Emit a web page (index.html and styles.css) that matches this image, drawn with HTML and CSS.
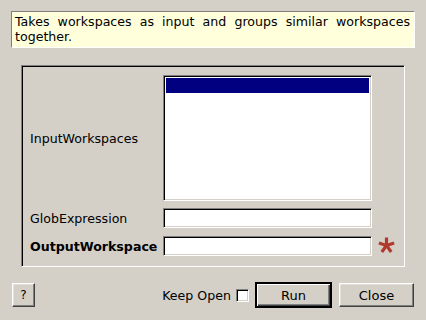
FILE: index.html
```html
<!DOCTYPE html>
<html>
<head>
    <title>GroupWorkspaces</title>
    <link rel="stylesheet" href="styles.css">
</head>
<body>
    <div class="dialog">
        <p class="description">Takes workspaces as input and groups similar workspaces together.</p>

        <div class="prop-frame">
            <label class="prop-label">InputWorkspaces</label>
            <div class="list-box">
                <div class="list-item selected"></div>
            </div>
            <span></span>

            <label class="prop-label">GlobExpression</label>
            <input type="text" class="text-field">
            <span></span>

            <label class="prop-label mandatory">OutputWorkspace</label>
            <input type="text" class="text-field">
            <svg class="required" width="17" height="17" viewBox="0 0 17 17">
                <g stroke="#b03a2c" stroke-width="3.2" stroke-linecap="butt">
                    <line x1="8.5" y1="8.5" x2="8.5" y2="0.5"/>
                    <line x1="8.5" y1="8.5" x2="16.1" y2="6"/>
                    <line x1="8.5" y1="8.5" x2="13.2" y2="15"/>
                    <line x1="8.5" y1="8.5" x2="3.8" y2="15"/>
                    <line x1="8.5" y1="8.5" x2="0.9" y2="6"/>
                </g>
            </svg>
        </div>

        <div class="footer">
            <button class="button help">?</button>
            <div class="footer-right">
                <label class="keep-open">Keep Open <span class="check-box"></span></label>
                <button class="button default">Run</button>
                <button class="button">Close</button>
            </div>
        </div>
    </div>
</body>
</html>
```

FILE: styles.css
```css
body {
    margin: 0;
    background: #d4d0c8;
    color: #000;
    font-family: "DejaVu Sans", sans-serif;
    font-size: 12.6px;
}
.dialog {
    width: 426px;
    height: 320px;
    box-sizing: border-box;
    padding: 11px 11px 0 11px;
}
.description {
    margin: 0;
    height: 37px;
    box-sizing: border-box;
    padding: 2px 4px 0 3px;
    line-height: 15px;
    text-align: justify;
    background: #ffffdc;
    border: 1px solid;
    border-color: #808080 #ffffff #ffffff #808080;
}
.prop-frame {
    margin: 17px 10px 0 10px;
    height: 202px;
    box-sizing: border-box;
    padding: 9px 0 0 8px;
    display: grid;
    grid-template-columns: 133px 209px 1fr;
    grid-template-rows: 126px 21px 21px;
    row-gap: 7px;
    align-items: start;
    border: 1px solid;
    border-color: #808080 #ffffff #ffffff #808080;
    box-shadow: inset 1px 1px 0 #000, inset -1px -1px 0 #d4d0c8;
}
.prop-label {
    align-self: center;
    white-space: nowrap;
}
.prop-label.mandatory {
    font-weight: bold;
}
.list-box, .text-field {
    box-sizing: border-box;
    background: #fff;
    border: 1px solid;
    border-color: #808080 #ffffff #ffffff #808080;
    box-shadow: inset 1px 1px 0 #000, inset -1px -1px 0 #d4d0c8;
}
.list-box {
    height: 126px;
    padding: 2px 2px;
}
.list-item {
    height: 15px;
}
.list-item.selected {
    background: #000080;
}
.text-field {
    height: 20px;
    width: 209px;
    margin: 0;
    padding: 0 3px;
    font: inherit;
    outline: none;
}
.required {
    margin: 1px 0 0 6px;
}
.footer {
    display: flex;
    justify-content: space-between;
    align-items: center;
    margin: 15px 1px 0 1px;
}
.footer-right {
    display: flex;
    align-items: center;
    gap: 7px;
}
.keep-open {
    display: flex;
    align-items: center;
    gap: 5px;
    margin-right: -1px;
}
.check-box {
    width: 13px;
    height: 13px;
    box-sizing: border-box;
    background: #fff;
    border: 1px solid;
    border-color: #808080 #ffffff #ffffff #808080;
    box-shadow: inset 1px 1px 0 #000, inset -1px -1px 0 #d4d0c8;
}
.button {
    height: 24px;
    min-width: 75px;
    box-sizing: border-box;
    padding: 0 6px;
    font: inherit;
    font-size: 13px;
    color: #000;
    background: #d4d0c8;
    border: 1px solid;
    border-color: #ffffff #404040 #404040 #ffffff;
    box-shadow: inset -1px -1px 0 #808080, inset 1px 1px 0 #e4e0d8;
}
.button.help {
    min-width: 23px;
    width: 23px;
    padding: 0;
    font-size: 12px;
}
.button.default {
    height: 26px;
    min-width: 77px;
    outline: none;
    border: 2px solid;
    border-color: #000 #000 #000 #000;
    box-shadow: inset 1px 1px 0 #fff, inset -1px -1px 0 #404040, inset -2px -2px 0 #808080;
}
```
